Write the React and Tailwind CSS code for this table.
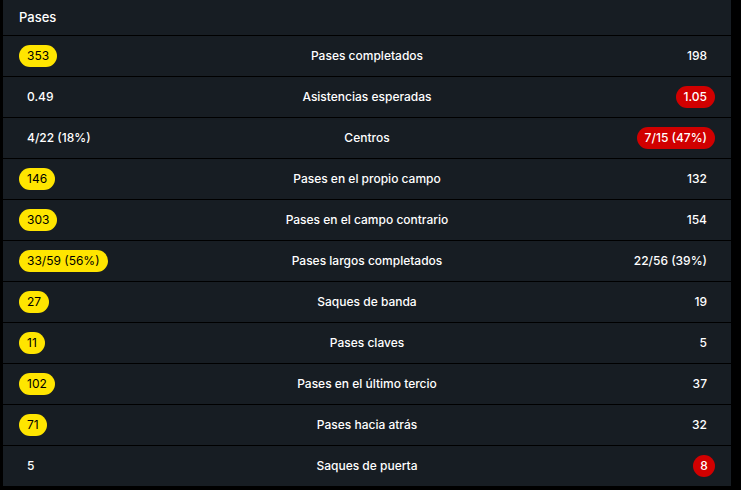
const filas = [
  { l: '353', label: 'Pases completados', r: '198', w: 'l' },
  { l: '0.49', label: 'Asistencias esperadas', r: '1.05', w: 'r' },
  { l: '4/22 (18%)', label: 'Centros', r: '7/15 (47%)', w: 'r' },
  { l: '146', label: 'Pases en el propio campo', r: '132', w: 'l' },
  { l: '303', label: 'Pases en el campo contrario', r: '154', w: 'l' },
  { l: '33/59 (56%)', label: 'Pases largos completados', r: '22/56 (39%)', w: 'l' },
  { l: '27', label: 'Saques de banda', r: '19', w: 'l' },
  { l: '11', label: 'Pases claves', r: '5', w: 'l' },
  { l: '102', label: 'Pases en el último tercio', r: '37', w: 'l' },
  { l: '71', label: 'Pases hacia atrás', r: '32', w: 'l' },
  { l: '5', label: 'Saques de puerta', r: '8', w: 'r' },
]

function Valor({ v, pill, lado }) {
  const cls = pill
    ? lado === 'l'
      ? 'bg-[#ffe500] text-black font-normal'
      : 'bg-[#d10000] text-white font-medium'
    : 'text-white font-medium'
  return (
    <span className={`inline-flex items-center h-[22px] px-2 rounded-full text-[12px] leading-none ${pill && v.length === 1 ? 'w-[22px] px-0 justify-center' : ''} ${cls}`}>
      {v}
    </span>
  )
}

export default function App() {
  return (
    <div className="w-[741px] h-[490px] bg-black pl-[3px] font-['Inter','Noto_Sans',sans-serif]">
      <div className="w-[728px] bg-[#171d23] text-white">
        <div className="h-[36px] flex items-center px-4 text-[13px] font-medium border-b border-black">Pases</div>
        {filas.map((f, i) => (
          <div key={i} className="h-[41px] grid grid-cols-[1fr_auto_1fr] items-center px-4 border-b border-black">
            <div className="flex justify-start">
              <Valor v={f.l} pill={f.w === 'l'} lado="l" />
            </div>
            <div className="text-[12px] font-medium text-center">{f.label}</div>
            <div className="flex justify-end">
              <Valor v={f.r} pill={f.w === 'r'} lado="r" />
            </div>
          </div>
        ))}
      </div>
    </div>
  )
}
